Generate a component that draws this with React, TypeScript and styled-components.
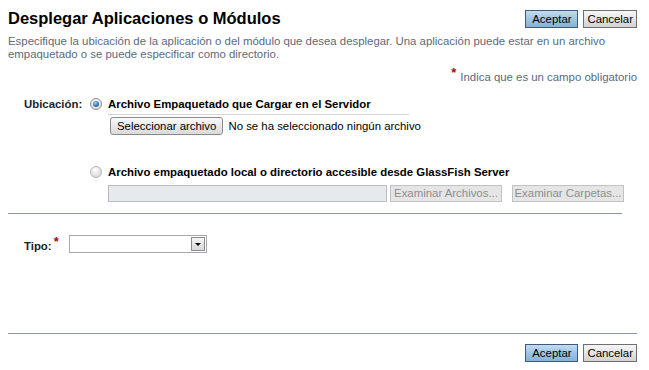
import React from "react";
import styled, { createGlobalStyle } from "styled-components";

const GlobalStyle = createGlobalStyle`
  body {
    margin: 0;
    background: #fff;
    font-family: "Liberation Sans", Arial, sans-serif;
    font-size: 11.4px;
    color: #000;
  }
`;

const Page = styled.div`
  width: 649px;
  height: 370px;
  box-sizing: border-box;
  padding: 0 12px 0 8px;
  display: flex;
  flex-direction: column;
`;

const Header = styled.div`
  display: flex;
  justify-content: space-between;
  align-items: flex-start;
  padding-top: 8px;
`;

const Title = styled.h1`
  margin: 0;
  font-size: 16.5px;
  line-height: 20px;
  font-weight: bold;
  color: #000;
`;

const ButtonGroup = styled.div<{ $top?: number }>`
  display: flex;
  gap: 5px;
  margin-top: ${(p) => p.$top ?? 0}px;
`;

const Button = styled.button<{ $primary?: boolean }>`
  font-family: inherit;
  font-size: 11.4px;
  height: 18px;
  min-width: 53px;
  line-height: 16px;
  padding: 0 3px;
  border: 1px solid ${(p) => (p.$primary ? "#3f5b78" : "#6f6f6f")};
  border-radius: 0;
  color: #000;
  background: ${(p) =>
    p.$primary
      ? "linear-gradient(#c2dcef, #9cc3e3 55%, #86b3d8)"
      : "linear-gradient(#f7f7f7, #e3e3e3 55%, #d2d2d2)"};
`;

const Description = styled.p`
  margin: 7px 0 0;
  color: #5b6a7a;
  line-height: 13px;
`;

const Legend = styled.div`
  margin-top: 5px;
  text-align: right;
  color: #5b6a7a;
  line-height: 14px;
`;

const Star = styled.span<{ $gap?: number }>`
  color: #b0000c;
  font-weight: bold;
  font-size: 13px;
  vertical-align: 4px;
  margin-left: ${(p) => p.$gap ?? 0}px;
  margin-right: 4px;
`;

const FieldRow = styled.div<{ $top: number; $center?: boolean }>`
  display: flex;
  align-items: ${(p) => (p.$center ? "center" : "flex-start")};
  margin-top: ${(p) => p.$top}px;
`;

const Label = styled.div<{ $width?: number }>`
  box-sizing: border-box;
  padding-left: 16px;
  width: ${(p) => (p.$width ? `${p.$width}px` : "auto")};
  font-weight: bold;
  color: #1e1e1e;
  line-height: 14px;
  white-space: nowrap;
`;

const Options = styled.div`
  display: flex;
  flex-direction: column;
`;

const Option = styled.div<{ $top?: number }>`
  display: flex;
  align-items: flex-start;
  margin-top: ${(p) => p.$top ?? 0}px;
`;

const Radio = styled.span<{ $checked?: boolean }>`
  position: relative;
  flex: none;
  box-sizing: border-box;
  width: 12px;
  height: 12px;
  margin: 1px 6px 0 2px;
  border-radius: 50%;
  border: 1px solid ${(p) => (p.$checked ? "#8c8c8c" : "#b4b4b4")};
  background: ${(p) =>
    p.$checked
      ? "radial-gradient(circle at 50% 35%, #ffffff, #d9d9d9)"
      : "radial-gradient(circle at 40% 30%, #ffffff, #cfcfcf)"};
  &::after {
    content: "";
    display: ${(p) => (p.$checked ? "block" : "none")};
    position: absolute;
    left: 2px;
    top: 2px;
    width: 6px;
    height: 6px;
    border-radius: 50%;
    background: radial-gradient(circle at 40% 35%, #9fd0f5, #2a6db0 60%, #16497e);
  }
`;

const OptionBody = styled.div`
  display: flex;
  flex-direction: column;
`;

const OptionTitle = styled.div<{ $underline?: boolean }>`
  font-weight: bold;
  line-height: 14px;
  white-space: nowrap;
  padding-bottom: ${(p) => (p.$underline ? "3px" : "0")};
  width: ${(p) => (p.$underline ? "301px" : "auto")};
  border-bottom: ${(p) => (p.$underline ? "1px solid #d4d4d4" : "none")};
`;

const FileRow = styled.div`
  display: flex;
  align-items: center;
  gap: 5px;
  margin-top: 2px;
  margin-left: 2px;
`;

const FileButton = styled.button`
  font-family: inherit;
  font-size: 11.4px;
  height: 18px;
  padding: 0 6px;
  border: 1px solid #8a8a8a;
  border-radius: 3px;
  color: #000;
  background: linear-gradient(#fbfbfb, #e8e8e8 50%, #dadada);
`;

const PathRow = styled.div`
  display: flex;
  align-items: center;
  gap: 3px;
  margin-top: 6px;
`;

const PathInput = styled.div`
  box-sizing: border-box;
  width: 279px;
  height: 17px;
  border: 1px solid #b9bdc1;
  background: #e7eaed;
`;

const DisabledButton = styled.button<{ $gap?: number }>`
  font-family: inherit;
  font-size: 11.4px;
  height: 17px;
  width: 112px;
  line-height: 15px;
  padding: 0;
  white-space: nowrap;
  margin-left: ${(p) => p.$gap ?? 0}px;
  border: 1px solid #c2c2c2;
  border-radius: 0;
  color: #8e8e8e;
  background: #e5e5e5;
`;

const Separator = styled.hr<{ $top: number; $width: number }>`
  margin: ${(p) => p.$top}px 0 0;
  width: ${(p) => p.$width}px;
  border: none;
  border-top: 1px solid #8f99a3;
  height: 0;
`;

const Select = styled.div`
  position: relative;
  box-sizing: border-box;
  width: 138px;
  height: 18px;
  margin-left: 6px;
  border: 1px solid #a5a9ad;
  background: #fff;
`;

const SelectArrow = styled.span`
  position: absolute;
  right: 1px;
  top: 1px;
  box-sizing: border-box;
  width: 14px;
  height: 14px;
  border: 1px solid #8c8c8c;
  background: linear-gradient(#f6f6f6, #d8d8d8);
  &::after {
    content: "";
    position: absolute;
    left: 3px;
    top: 5px;
    border-left: 3px solid transparent;
    border-right: 3px solid transparent;
    border-top: 3px solid #000;
  }
`;

const Footer = styled.div`
  margin-top: auto;
  padding-bottom: 8px;
`;

const FooterButtons = styled.div`
  display: flex;
  justify-content: flex-end;
  margin-top: 10px;
`;

export default function App() {
  return (
    <>
      <GlobalStyle />
      <Page>
        <Header>
          <Title>Desplegar Aplicaciones o Módulos</Title>
          <ButtonGroup $top={2}>
            <Button $primary>Aceptar</Button>
            <Button>Cancelar</Button>
          </ButtonGroup>
        </Header>
        <Description>
          Especifique la ubicación de la aplicación o del módulo que desea desplegar. Una
          aplicación puede estar en un archivo empaquetado o se puede especificar como
          directorio.
        </Description>
        <Legend>
          <Star>*</Star>Indica que es un campo obligatorio
        </Legend>

        <FieldRow $top={13}>
          <Label $width={80}>Ubicación:</Label>
          <Options>
            <Option>
              <Radio $checked />
              <OptionBody>
                <OptionTitle $underline>Archivo Empaquetado que Cargar en el Servidor</OptionTitle>
                <FileRow>
                  <FileButton>Seleccionar archivo</FileButton>
                  <span>No se ha seleccionado ningún archivo</span>
                </FileRow>
              </OptionBody>
            </Option>
            <Option $top={30}>
              <Radio />
              <OptionBody>
                <OptionTitle>Archivo empaquetado local o directorio accesible desde GlassFish Server</OptionTitle>
                <PathRow>
                  <PathInput />
                  <DisabledButton>Examinar Archivos...</DisabledButton>
                  <DisabledButton $gap={7}>Examinar Carpetas...</DisabledButton>
                </PathRow>
              </OptionBody>
            </Option>
          </Options>
        </FieldRow>

        <Separator $top={11} $width={614} />

        <FieldRow $top={21} $center>
          <Label>
            Tipo:<Star $gap={2}>*</Star>
          </Label>
          <Select>
            <SelectArrow />
          </Select>
        </FieldRow>

        <Footer>
          <Separator $top={0} $width={629} />
          <FooterButtons>
            <ButtonGroup>
              <Button $primary>Aceptar</Button>
              <Button>Cancelar</Button>
            </ButtonGroup>
          </FooterButtons>
        </Footer>
      </Page>
    </>
  );
}
